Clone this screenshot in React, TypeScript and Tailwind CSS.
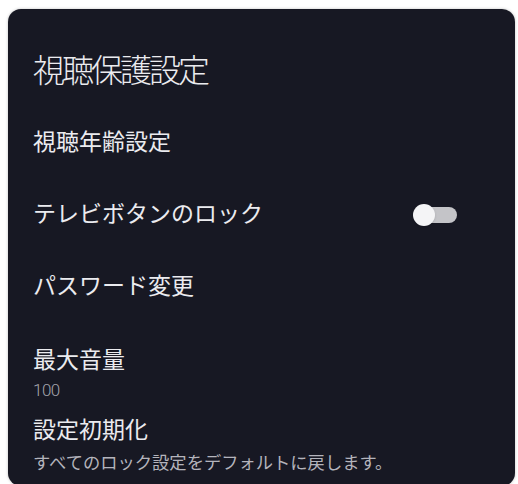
import { useState } from 'react'

const font = 'font-["Roboto","Noto_Sans_CJK_JP",sans-serif]'

function Toggle({ on, onChange }: { on: boolean; onChange: () => void }) {
  return (
    <button
      onClick={onChange}
      className="relative h-[22px] w-[44px] focus:outline-none"
    >
      <span className="absolute left-[6px] right-0 top-[3px] h-[16px] rounded-full bg-[#c4c4c8]" />
      <span
        className={
          'absolute top-0 h-[22px] w-[22px] rounded-full bg-[#f4f4f6] shadow ' +
          (on ? 'right-0' : 'left-0')
        }
      />
    </button>
  )
}

export default function App() {
  const [locked, setLocked] = useState(false)

  return (
    <div className={'h-[484px] w-[518px] overflow-hidden bg-white ' + font}>
      <div className="ml-[8px] mt-[9px] h-[477px] w-[507px] rounded-[13px] bg-[#171823] pl-[25px] pt-[42px] text-[#ebebef] shadow-[0_0_3px_rgba(0,0,0,0.25)]">
        <h1 className="text-[32px] font-light leading-[40px] tracking-[-3px]">
          視聴保護設定
        </h1>

        <div className="mt-[16px] flex h-[72px] items-center text-[23px]">
          視聴年齢設定
        </div>

        <div className="flex h-[72px] items-center justify-between pr-[58px] text-[23px]">
          <span>テレビボタンのロック</span>
          <Toggle on={locked} onChange={() => setLocked(!locked)} />
        </div>

        <div className="flex h-[72px] items-center text-[23px]">
          パスワード変更
        </div>

        <div className="mt-[24px] text-[23px] leading-[28px]">最大音量</div>
        <div className="mt-[5px] text-[17px] font-light leading-[20px] tracking-[-0.5px] text-[#a4a4ac]">
          100
        </div>

        <div className="mt-[17px] text-[23px] leading-[28px]">設定初期化</div>
        <div className="mt-[8px] text-[17.3px] leading-[20px] text-[#b4b4bc]">
          すべてのロック設定をデフォルトに戻します。
        </div>
      </div>
    </div>
  )
}
